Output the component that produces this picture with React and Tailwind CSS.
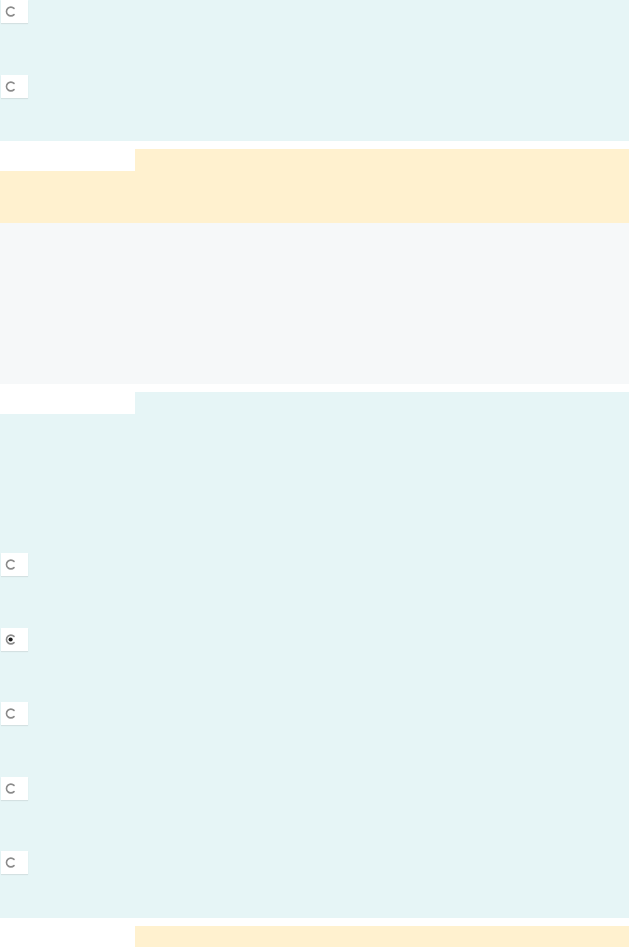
import React from 'react';

const Radio = ({ checked }) => (
  <div className="w-[27px] h-[23px] ml-[1px] bg-white shadow-[0_1px_1px_rgba(0,0,0,0.08)] flex items-center pl-[3px]">
    <svg width="13" height="13" viewBox="0 0 13 13">
      <path
        d="M10 3.4 A4.4 4.4 0 1 0 10 9.6"
        fill="none"
        stroke="#8a8a8a"
        strokeWidth="1.6"
        strokeLinecap="round"
      />
      {checked && <circle cx="6.6" cy="6.5" r="2.1" fill="#1f1f1f" />}
    </svg>
  </div>
);

const TabRow = ({ color }) => (
  <div className="flex h-[22px]">
    <div className="w-[135px] bg-white" />
    <div className={`flex-1 ${color}`} />
  </div>
);

const App = () => {
  return (
    <div className="w-[629px] h-[947px] overflow-hidden bg-white font-['Liberation_Sans',sans-serif]">
      {/* top options */}
      <div className="bg-[#e6f5f6] h-[141px] flex flex-col gap-[52px]">
        <Radio />
        <Radio />
      </div>

      <div className="h-[8px]" />

      {/* notice */}
      <TabRow color="bg-[#fff1cf]" />
      <div className="bg-[#fff1cf] h-[52px]" />

      {/* details */}
      <div className="bg-[#f6f8f9] h-[161px]" />

      <div className="h-[8px]" />

      {/* question */}
      <TabRow color="bg-[#e6f5f6]" />
      <div className="bg-[#e6f5f6] h-[504px] pt-[139px] flex flex-col gap-[51.5px]">
        <Radio />
        <Radio checked />
        <Radio />
        <Radio />
        <Radio />
      </div>

      <div className="h-[8px]" />

      <TabRow color="bg-[#fff1cf]" />
    </div>
  );
};

export default App;
